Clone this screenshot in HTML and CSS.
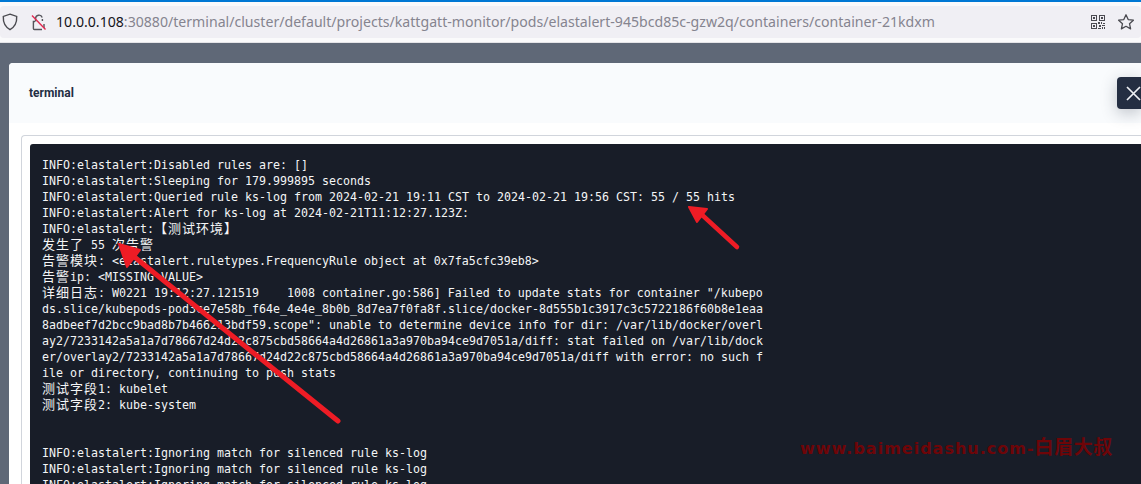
FILE: index.html
```html
<!DOCTYPE html>
<html lang="zh">
<head>
<meta charset="utf-8">
<title>terminal</title>
<link rel="stylesheet" href="styles.css">
</head>
<body>
<header class="browser">
  <div class="urlbar">
    <svg class="ico-shield" width="16" height="18" viewBox="0 0 16 18"><path d="M8 1.2 14.7 3.4C15 9.4 12.8 14 8 16.6 3.2 14 1 9.4 1.3 3.4Z" fill="none" stroke="#4a4a50" stroke-width="1.4"/></svg>
    <svg class="ico-lock" width="16" height="18" viewBox="0 0 16 18"><path d="M4.6 8.5V5.5a3.4 3.4 0 0 1 6.6-1.1M11.4 6V8" fill="none" stroke="#55555b" stroke-width="1.4"/><path d="M4 8.5H2.4V15.5a1 1 0 0 0 1 1H11M13 11V15" fill="none" stroke="#55555b" stroke-width="1.4"/><path d="M1 2.5 14.5 16.5" stroke="#e22850" stroke-width="1.4"/></svg>
    <div class="url"><span class="host">10.0.0.108</span>:30880/terminal/cluster/default/projects/kattgatt-monitor/pods/elastalert-945bcd85c-gzw2q/containers/container-21kdxm</div>
    <svg class="ico-qr" width="14" height="14" viewBox="0 0 14 14" fill="#4a4a50"><path d="M0 0h6v6H0zM1 1v4h4V1zM2 2h2v2H2zM8 0h6v6H8zM9 1v4h4V1zM10 2h2v2h-2zM0 8h6v6H0zM1 9v4h4V9zM2 10h2v2H2zM7 7h2v2H7zM10 7h1v2h-1zM12 8h2v1h-2zM8 10h2v2H8zM11 10h3v1h-3zM11 12h1v2h-1zM13 12h1v2h-1zM7 13h3v1H7z" fill-rule="evenodd"/></svg>
    <svg class="ico-star" width="18" height="18" viewBox="0 0 18 18"><path d="M9 1.8 11.2 6.6 16.4 7.2 12.5 10.7 13.6 15.9 9 13.3 4.4 15.9 5.5 10.7 1.6 7.2 6.8 6.6Z" fill="none" stroke="#4a4a50" stroke-width="1.3" stroke-linejoin="round"/></svg>
  </div>
</header>
<main class="stage">
  <section class="modal">
    <div class="modal-head"><h1 class="modal-title">terminal</h1></div>
    <div class="modal-body">
      <div class="frame">
<pre class="term">INFO:elastalert:Disabled rules are: []
INFO:elastalert:Sleeping for 179.999895 seconds
INFO:elastalert:Queried rule ks-log from 2024-02-21 19:11 CST to 2024-02-21 19:56 CST: 55 / 55 hits
INFO:elastalert:Alert for ks-log at 2024-02-21T11:12:27.123Z:
INFO:elastalert:<span class="cjk">【测试环境】</span>
<span class="cjk">发生了</span> 55 <span class="cjk">次告警</span>
<span class="cjk">告警模块</span>: &lt;elastalert.ruletypes.FrequencyRule object at 0x7fa5cfc39eb8&gt;
<span class="cjk">告警</span>ip: &lt;MISSING VALUE&gt;
<span class="cjk">详细日志</span>: W0221 19:12:27.121519    1008 container.go:586] Failed to update stats for container "/kubepo
ds.slice/kubepods-pod3ce7e58b_f64e_4e4e_8b0b_8d7ea7f0fa8f.slice/docker-8d555b1c3917c3c5722186f60b8e1eaa
8adbeef7d2bcc9bad8b7b466213bdf59.scope": unable to determine device info for dir: /var/lib/docker/overl
ay2/7233142a5a1a7d78667d24d22c875cbd58664a4d26861a3a970ba94ce9d7051a/diff: stat failed on /var/lib/dock
er/overlay2/7233142a5a1a7d78667d24d22c875cbd58664a4d26861a3a970ba94ce9d7051a/diff with error: no such f
ile or directory, continuing to push stats
<span class="cjk">测试字段</span>1: kubelet
<span class="cjk">测试字段</span>2: kube-system


INFO:elastalert:Ignoring match for silenced rule ks-log
INFO:elastalert:Ignoring match for silenced rule ks-log
INFO:elastalert:Ignoring match for silenced rule ks-log</pre>
      </div>
    </div>
  </section>
  <button class="close" aria-label="close"><svg width="15" height="15" viewBox="0 0 15 15"><path d="M1 1 14 14M14 1 1 14" stroke="#eef0f4" stroke-width="1.7"/></svg></button>
</main>
<svg class="marks" width="1141" height="484" viewBox="0 0 1141 484">
  <g fill="#ee1c25" stroke="#ee1c25" stroke-linecap="round" stroke-linejoin="round">
    <path d="M737 247 700 213" fill="none" stroke-width="4.5"/>
    <path d="M689 207 707 209 697 222Z" stroke-width="2"/>
    <path d="M338 421 132 255" fill="none" stroke-width="5"/>
    <path d="M119 244 140 250 127 267Z" stroke-width="2"/>
  </g>
</svg>
<div class="watermark">www.baimeidashu.com-<span class="wm-cjk">白眉大叔</span></div>
</body>
</html>
```

FILE: styles.css
```css
* { box-sizing: border-box; }
html, body { margin: 0; padding: 0; height: 484px; overflow: hidden; background: #5f6877; }
body { position: relative; display: flex; flex-direction: column; }
.browser { height: 43px; flex: none; background: #fafafb; border-top: 2px solid #0078d4; padding: 4px 0 4px 0; box-shadow: inset 0 -1px 0 #e4e4e8; }
.urlbar { height: 32px; background: #f0eff4; border-radius: 4px; display: flex; align-items: center; padding: 0 6px 0 2px; }
.ico-shield { margin-right: 13px; flex: none; }
.ico-lock { margin-right: 9px; flex: none; }
.url { flex: 1; font: 14.11px/20px "Noto Sans", "Open Sans", sans-serif; color: #85848f; white-space: nowrap; overflow: hidden; }
.host { color: #15141a; }
.ico-qr { margin-right: 12px; flex: none; }
.ico-star { flex: none; }
.stage { flex: 1; position: relative; padding: 20px 0 0 9px; min-height: 0; }
.modal { background: #fff; border-radius: 4px 0 0 0; height: 100%; overflow: hidden; }
.modal-head { height: 60px; background: #f9fbfd; display: flex; align-items: center; padding-left: 20px; }
.modal-title { margin: 0; font: 700 12px/16px Roboto, sans-serif; color: #242e42; }
.modal-body { padding: 12px 0 0 12px; }
.frame { border: 1px solid #d1d5dc; border-right: 0; border-radius: 4px 0 0 0; padding: 8px 0 0 8px; background: #fff; }
.term { margin: 0; height: 400px; background: #181d28; color: #f4f5f6; border-radius: 3px 0 0 0; padding: 13px 0 0 12px; font: 11.63px/16px "DejaVu Sans Mono", "Noto Sans CJK SC", monospace; overflow: hidden; }
.cjk { font-family: "Noto Sans CJK SC", sans-serif; font-size: 13px; letter-spacing: 0.98px; line-height: 1; }
.close { position: absolute; right: 0; top: 34px; width: 24px; height: 32px; padding: 0 0 0 9px; border: 0; border-radius: 4px 0 0 4px; background: #242e42; box-shadow: 0 4px 16px rgba(36,46,66,.28); display: flex; align-items: center; }
.marks { position: absolute; left: 0; top: 0; pointer-events: none; }
.watermark { position: absolute; left: 800px; top: 436px; font: 700 16px/20px "DejaVu Sans", "Noto Sans CJK SC", sans-serif; letter-spacing: 1px; color: #6e0508; white-space: nowrap; }
.wm-cjk { font-family: "Noto Sans CJK SC", sans-serif; font-size: 19px; letter-spacing: 0.6px; line-height: 1; }
```
